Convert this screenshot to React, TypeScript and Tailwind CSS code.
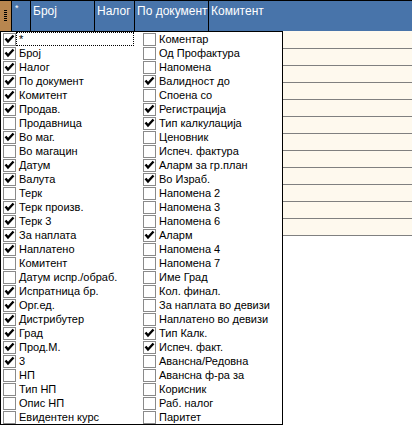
import React from "react";

type Item = { label: string; checked: boolean };

const left: Item[] = [
  { label: "*", checked: true },
  { label: "Број", checked: true },
  { label: "Налог", checked: true },
  { label: "По документ", checked: true },
  { label: "Комитент", checked: true },
  { label: "Продав.", checked: true },
  { label: "Продавница", checked: false },
  { label: "Во маг.", checked: true },
  { label: "Во магацин", checked: false },
  { label: "Датум", checked: true },
  { label: "Валута", checked: true },
  { label: "Терк", checked: false },
  { label: "Терк произв.", checked: true },
  { label: "Терк 3", checked: true },
  { label: "За наплата", checked: true },
  { label: "Наплатено", checked: true },
  { label: "Комитент", checked: false },
  { label: "Датум испр./обраб.", checked: false },
  { label: "Испратница бр.", checked: true },
  { label: "Орг.ед.", checked: true },
  { label: "Дистрибутер", checked: true },
  { label: "Град", checked: true },
  { label: "Прод.М.", checked: true },
  { label: "3", checked: true },
  { label: "НП", checked: false },
  { label: "Тип НП", checked: false },
  { label: "Опис НП", checked: false },
  { label: "Евидентен курс", checked: false },
];

const right: Item[] = [
  { label: "Коментар", checked: false },
  { label: "Од Профактура", checked: false },
  { label: "Напомена", checked: false },
  { label: "Валидност до", checked: true },
  { label: "Споена со", checked: false },
  { label: "Регистрација", checked: true },
  { label: "Тип калкулација", checked: true },
  { label: "Ценовник", checked: false },
  { label: "Испеч. фактура", checked: false },
  { label: "Аларм за гр.план", checked: true },
  { label: "Во Израб.", checked: true },
  { label: "Напомена 2", checked: false },
  { label: "Напомена 3", checked: false },
  { label: "Напомена 6", checked: false },
  { label: "Аларм", checked: true },
  { label: "Напомена 4", checked: false },
  { label: "Напомена 7", checked: false },
  { label: "Име Град", checked: false },
  { label: "Кол. финал.", checked: false },
  { label: "За наплата во девизи", checked: false },
  { label: "Наплатено во девизи", checked: false },
  { label: "Тип Калк.", checked: true },
  { label: "Испеч. факт.", checked: true },
  { label: "Авансна/Редовна", checked: false },
  { label: "Авансна ф-ра за", checked: false },
  { label: "Корисник", checked: false },
  { label: "Раб. налог", checked: false },
  { label: "Паритет", checked: false },
];

function CheckBox({ checked }: { checked: boolean }) {
  return (
    <div className="h-[13px] w-[13px] shrink-0 border border-[#8a8a8a] bg-white">
      {checked && (
        <svg width="11" height="11" viewBox="0 0 11 11">
          <path d="M1.5 4.5 L4 7.5 L9.5 1.5" fill="none" stroke="#000" strokeWidth="2.4" />
        </svg>
      )}
    </div>
  );
}

function Row({ item, focused }: { item: Item; focused?: boolean }) {
  return (
    <div className="flex h-[14px] items-center">
      <div className="ml-[2px]">
        <CheckBox checked={item.checked} />
      </div>
      <div
        className={`flex h-[14px] items-center whitespace-nowrap border pl-[2px] text-[11px] leading-[12px] text-black ${
          focused ? "w-[118px] border-dotted border-black" : "border-transparent"
        }`}
      >
        {item.label}
      </div>
    </div>
  );
}

export default function App() {
  const headerCells = [
    { label: "Број", w: "w-[64px]" },
    { label: "Налог", w: "w-[40px]" },
    { label: "По документ", w: "w-[74px]" },
  ];

  return (
    <div
      className="flex h-[427px] w-[412px] flex-col overflow-hidden bg-white"
      style={{ fontFamily: '"Liberation Sans", Arial, sans-serif' }}
    >
      {/* grid header */}
      <div className="flex h-[31px] shrink-0 border-t border-black bg-[#4874aa] text-white">
        <div className="flex w-[11px] items-start justify-center bg-[#b8864f] pt-[9px]">
          <svg width="3" height="11" viewBox="0 0 3 11">
            {[0, 2, 4, 6, 8, 10].map((y) => (
              <rect key={y} x="0" y={y} width="3" height="1" fill="#000" />
            ))}
          </svg>
        </div>
        <div className="w-[19px] border-l border-black pl-[3px] pt-[2px] text-[9px] leading-[10px]">*</div>
        {headerCells.map((c) => (
          <div
            key={c.label}
            className={`${c.w} whitespace-nowrap border-l border-black pl-[2px] pt-[3px] text-[12px] leading-[14px]`}
          >
            {c.label}
          </div>
        ))}
        <div className="flex-1 whitespace-nowrap border-l border-black pl-[2px] pt-[3px] text-[12px] leading-[14px]">
          Комитент
        </div>
      </div>

      <div className="flex flex-1">
        {/* column chooser popup */}
        <div className="flex h-[394px] w-[283px] shrink-0 border border-black bg-white">
          <div className="w-[140px]">
            {left.map((it, i) => (
              <Row key={i} item={it} focused={i === 0} />
            ))}
          </div>
          <div className="flex-1">
            {right.map((it, i) => (
              <Row key={i} item={it} />
            ))}
          </div>
        </div>

        {/* grid rows */}
        <div className="flex-1">
          <div className="h-[18px] border-b border-[#808080] bg-[#fef9ee]" />
          {Array.from({ length: 11 }).map((_, i) => (
            <div key={i} className="h-[17px] border-b border-[#808080] bg-[#fef9ee]" />
          ))}
        </div>
      </div>
    </div>
  );
}
